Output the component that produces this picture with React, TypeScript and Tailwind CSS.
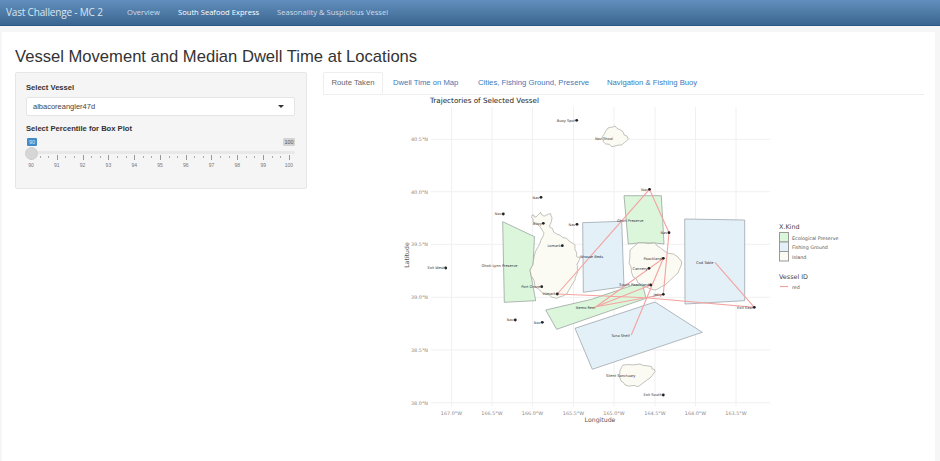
import React from 'react';

const xLines = [451.5, 492, 532.5, 573.5, 614, 655, 695.5, 736];
const yLines = [139.3, 191.7, 244.3, 297.3, 350, 402.7];
const lonLabels = ['167.0°W', '166.5°W', '166.0°W', '165.5°W', '165.0°W', '164.5°W', '164.0°W', '163.5°W'];
const latLabels = ['40.5°N', '40.0°N', '39.5°N', '39.0°N', '38.5°N', '38.0°N'];

const preserves = [
  '502.7,221.7 534.5,236.7 533,265 530,270 535.7,300.7 504.3,302.3',
  '624,195.7 661.3,195.7 664,244 655,243 638,243 628.3,244',
  '545.7,310 591.7,299.3 633.3,285 642.7,285 646,298.3 556.7,329.3',
];
const grounds = [
  '684.7,219 744.7,220 744.7,300.7 685,304',
  '582.7,222.7 621.7,221.3 624,286.7 583.3,292.3',
  '575,328.3 655,302 702.3,332.3 592.3,369.3',
];
const islands = [
  '532,215 536,217 540.7,212.3 543.3,216 550.7,213.7 551.7,220 549.3,226.7 556.7,234 566.7,238.3 575,245 576.7,256.7 580,258 576.7,265 578,270 575,280 566.7,294 556.7,298.3 543.3,294 535,286.7 530,270 533,265 535,253 540,243 544,233 538,225 533,221.7',
  '630,250 638,243 655,243 663,250 678,257 681.7,263 678,273 665,285 655,290 641.7,285 633,276.7 629,263',
  '602.3,136.7 608,128 615,126 623,131.7 628.3,139.3 621.7,145 611.7,146.7 603.3,141.7',
  '620,370 623,365 640,364 651.7,366.7 655,371.7 650,378 638,386.7 625,385 620,378',
];
const routes = [
  '557.3,294 649.5,189.3 669,232.7 663.3,294.3 645.7,297.7 754.3,307.3 715,262.3',
  '557.3,294 645.7,297.7 596,306.7 663.3,258.3 631.3,335',
  '596,306.7 650.7,285',
];

// [x, y, label, dot]
const places: [number, number, string, boolean][] = [
  [576.7, 120.3, 'Buoy Spot', true],
  [614.5, 138.5, 'Nav Shoal', false],
  [541, 197.3, 'Nav', true],
  [503.3, 214, 'Nav', true],
  [543.3, 223.3, 'Buoy', true],
  [577, 224.3, 'Nav', true],
  [562.3, 245.7, 'Lomark', true],
  [604.5, 257, 'Wrasse Beds', false],
  [445.7, 268, 'Exit West', true],
  [519, 266, 'Ghoti-Lynn Preserve', false],
  [541.7, 286.7, 'Port Grove', true],
  [557.3, 294, 'Himark', true],
  [515.3, 320, 'Nav', true],
  [542.3, 322.3, 'Nav', true],
  [597, 307.7, 'Nemo Reef', false],
  [631.3, 335.3, 'Tuna Shelf', false],
  [637, 375.3, 'Silent Sanctuary', false],
  [663.3, 395, 'Exit South', true],
  [649.5, 189.3, 'Nav', true],
  [645, 220.3, 'Ghoti Preserve', false],
  [669, 232.7, 'Nav', true],
  [663.3, 258.3, 'Paackland', true],
  [649, 268.3, 'Cannery', true],
  [650.7, 285, 'South Paackland', true],
  [663.3, 294.3, 'Jetty', true],
  [715, 262.5, 'Cod Table', false],
  [754.3, 307.3, 'Exit East', true],
];

const tickValues = [90, 91, 92, 93, 94, 95, 96, 97, 98, 99, 100];

// coastlines are not straight, break each edge up and nudge the new points
function roughen(points: string) {
  const pts = points.split(' ').map((p) => p.split(',').map(Number));
  const out: string[] = [];
  pts.forEach(([x, y], i) => {
    const [nx, ny] = pts[(i + 1) % pts.length];
    for (let k = 0; k < 3; k++) {
      const t = k / 3;
      const wobble = k === 0 ? 0 : Math.sin(i * 7.3 + k * 2.1) * 0.7;
      out.push(`${(x + (nx - x) * t + wobble).toFixed(1)},${(y + (ny - y) * t - wobble).toFixed(1)}`);
    }
  });
  return out.join(' ');
}

function RouteMap() {
  const font = 'DejaVu Sans, sans-serif';
  return (
    <svg width="520" height="330" viewBox="400 96 520 330" className="block">
      <text x="430" y="102.5" fontSize="7.2" fill="#222" fontFamily={font}>
        Trajectories of Selected Vessel
      </text>
      {xLines.map((x) => (
        <line key={x} x1={x} x2={x} y1="107" y2="406" stroke="#f0f0f0" strokeWidth="1" />
      ))}
      {yLines.map((y) => (
        <line key={y} x1="431" x2="770" y1={y} y2={y} stroke="#f0f0f0" strokeWidth="1" />
      ))}
      {preserves.map((p) => (
        <polygon key={p} points={p} fill="#dcf6dc" stroke="#8f9a93" strokeWidth="0.7" />
      ))}
      {grounds.map((p) => (
        <polygon key={p} points={p} fill="#e3f0f8" stroke="#939ca3" strokeWidth="0.7" />
      ))}
      {islands.map((p) => (
        <polygon key={p} points={roughen(p)} fill="#fbfaf3" stroke="#9a9a94" strokeWidth="0.6" strokeLinejoin="round" />
      ))}
      {routes.map((p) => (
        <polyline key={p} points={p} fill="none" stroke="#f4a3a0" strokeWidth="1.1" />
      ))}
      {places.map(([x, y, label, dot]) => (
        <g key={`${label}-${x}`}>
          {dot && <circle cx={x} cy={y} r="1.4" fill="#222" />}
          <text x={x - 1.5} y={y + 1.2} fontSize="3.6" fill="#333" textAnchor="end" fontFamily={font}>
            {label}
          </text>
        </g>
      ))}
      {lonLabels.map((l, i) => (
        <text key={l} x={xLines[i]} y="415" fontSize="4.9" fill="#888" textAnchor="middle" fontFamily={font}>
          {l}
        </text>
      ))}
      {latLabels.map((l, i) => (
        <text key={l} x="428" y={yLines[i] + 1.8} fontSize="4.9" fill="#888" textAnchor="end" fontFamily={font}>
          {l}
        </text>
      ))}
      <text x="600" y="422" fontSize="6.2" fill="#555" textAnchor="middle" fontFamily={font}>
        Longitude
      </text>
      <text transform="translate(409 255) rotate(-90)" fontSize="6.2" fill="#555" textAnchor="middle" fontFamily={font}>
        Latitude
      </text>

      <text x="779" y="229" fontSize="6.4" fill="#444" fontFamily={font}>X.Kind</text>
      <rect x="779.5" y="232.5" width="9" height="9.5" fill="#dcf6dc" stroke="#999" strokeWidth="1" />
      <rect x="779.5" y="242" width="9" height="9.5" fill="#e3f0f8" stroke="#999" strokeWidth="1" />
      <rect x="779.5" y="251.5" width="9" height="9.5" fill="#fbfaf3" stroke="#999" strokeWidth="1" />
      <text x="792" y="239.5" fontSize="4.8" fill="#555" fontFamily={font}>Ecological Preserve</text>
      <text x="792" y="249" fontSize="4.8" fill="#555" fontFamily={font}>Fishing Ground</text>
      <text x="792" y="258.5" fontSize="4.8" fill="#555" fontFamily={font}>Island</text>
      <text x="779" y="279" fontSize="6.4" fill="#444" fontFamily={font}>Vessel ID</text>
      <line x1="780" x2="788" y1="286.5" y2="286.5" stroke="#f4a3a0" strokeWidth="1.2" />
      <text x="792" y="288.5" fontSize="4.8" fill="#555" fontFamily={font}>red</text>
    </svg>
  );
}

function PercentileSlider() {
  return (
    <div className="relative h-[36px] w-[269px]">
      <span className="absolute left-px top-0 h-[8px] w-[10px] rounded-[1px] bg-[#428bca] text-center text-[5.5px] leading-[8px] text-[#dbe9f5]">90</span>
      <span className="absolute right-0 top-0 h-[8px] w-[12px] rounded-[1px] bg-[#d4d4d4] text-center text-[5.5px] leading-[8px] text-[#555]">100</span>
      <div className="absolute left-[1px] right-0 top-[13px] h-[3px] rounded bg-[#e8e8e8]" />
      <div className="absolute left-[5px] top-[17px] flex w-[259px] items-start justify-between">
        {Array.from({ length: 31 }, (_, i) => (
          <span key={i} className={i % 3 === 0 ? 'h-[5px] w-px bg-[#999]' : 'mt-px h-[2px] w-px bg-[#aaa]'} />
        ))}
      </div>
      <div className="absolute left-[-1px] top-[9px] h-[13px] w-[13px] rounded-full border border-[#cfcfcf] bg-[#d6d6d6]" />
      <div className="absolute left-[-5px] top-[23px] flex w-[278px] justify-between">
        {tickValues.map((v) => (
          <span key={v} className="w-[20px] text-center text-[5px] leading-[8px] text-[#777]">{v}</span>
        ))}
      </div>
    </div>
  );
}

export default function App() {
  return (
    <div className="h-[461px] w-[940px] overflow-hidden bg-[#f6f6f6] font-['Liberation_Sans',Arial,sans-serif]">
      <nav className="flex h-[26px] items-center border-b border-[#2f5a85] bg-gradient-to-b from-[#618fbd] to-[#3c6691] font-['Open_Sans',sans-serif] text-white">
        <span className="ml-[6px] w-[99px] whitespace-nowrap text-[10px] tracking-[-0.17px] text-[#dbe6f0]">Vast Challenge - MC 2</span>
        <span className="ml-[22px] w-[34px] whitespace-nowrap text-[7.6px] text-[#cfdde9]">Overview</span>
        <span className="ml-[17px] w-[82px] whitespace-nowrap text-[7.6px] text-white">South Seafood Express</span>
        <span className="ml-[17px] whitespace-nowrap text-[7.6px] text-[#cfdde9]">Seasonality &amp; Suspicious Vessel</span>
      </nav>

      <main className="ml-[2px] mr-[5px] mt-[6px] h-[429px] bg-white pl-[13px] pr-[11px]">
        <h1 className="pb-[2px] pt-[12px] text-[16.6px] leading-[26px] text-[#333]">Vessel Movement and Median Dwell Time at Locations</h1>

        <div className="flex">
          <aside className="h-[117px] w-[292px] shrink-0 rounded-[2px] border border-[#e6e6e6] bg-[#f5f5f5] pl-[10px] pt-[10px]">
            <label className="block text-[7.6px] font-bold leading-[10px] text-[#333]">Select Vessel</label>
            <div className="mt-[4px] flex h-[19px] w-[269px] items-center justify-between rounded-[2px] border border-[#e5e5e5] bg-white pl-[6px] pr-[10px] text-[7.5px] text-[#444]">
              <span>albacoreangler47d</span>
              <span className="h-0 w-0 border-x-[3px] border-t-[3px] border-x-transparent border-t-[#333]" />
            </div>
            <label className="mt-[8px] block text-[7.6px] font-bold leading-[10px] text-[#333]">Select Percentile for Box Plot</label>
            <div className="mt-[4px]">
              <PercentileSlider />
            </div>
          </aside>

          <section className="ml-[16px] min-w-0 flex-1">
            <div className="flex h-[23px] items-stretch border-b border-[#eeeeee] text-[7.7px]">
              <span className="flex w-[60px] items-center justify-center rounded-t-[2px] border border-[#eeeeee] border-b-white text-[#666]">Route Taken</span>
              <span className="ml-[10px] flex w-[66px] items-center whitespace-nowrap text-[#3d7ab8]">Dwell Time on Map</span>
              <span className="ml-[19px] flex w-[111px] items-center whitespace-nowrap text-[#3d7ab8]">Cities, Fishing Ground, Preserve</span>
              <span className="ml-[18px] flex items-center whitespace-nowrap text-[#3d7ab8]">Navigation &amp; Fishing Buoy</span>
            </div>
            <div className="ml-[77px] mt-px">
              <RouteMap />
            </div>
          </section>
        </div>
      </main>
    </div>
  );
}
